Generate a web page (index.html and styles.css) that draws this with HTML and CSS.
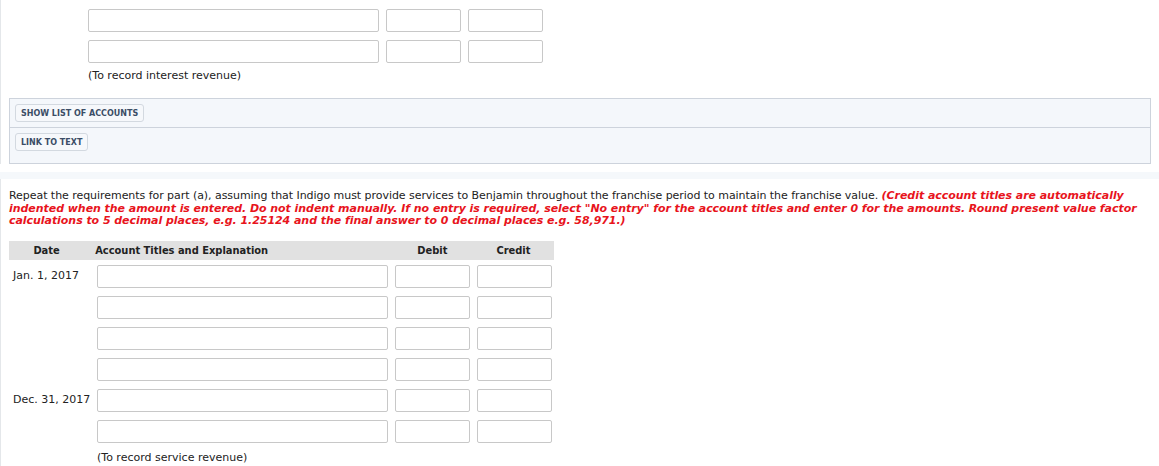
FILE: index.html
```html
<!DOCTYPE html>
<html>

<head>
    <title>Journal Entries</title>
    <link rel="stylesheet" href="styles.css">
</head>

<body>

    <div class="part-top">
        <div class="entry-row">
            <input class="acct" type="text">
            <input class="amt" type="text">
            <input class="amt" type="text">
        </div>
        <div class="entry-row">
            <input class="acct" type="text">
            <input class="amt" type="text">
            <input class="amt" type="text">
        </div>
        <p class="note">(To record interest revenue)</p>

        <div class="tools">
            <div class="tool-row"><button class="tool-btn">SHOW LIST OF ACCOUNTS</button></div>
            <div class="tool-row last"><button class="tool-btn">LINK TO TEXT</button></div>
        </div>
    </div>

    <div class="divider"></div>

    <div class="part-bottom">
        <p class="question">Repeat the requirements for part (a), assuming that Indigo must provide services to Benjamin throughout the franchise period to maintain the franchise value. <span class="hint">(Credit account titles are automatically indented when the amount is entered. Do not indent manually. If no entry is required, select "No entry" for the account titles and enter 0 for the amounts. Round present value factor calculations to 5 decimal places, e.g. 1.25124 and the final answer to 0 decimal places e.g. 58,971.)</span></p>

        <div class="journal">
            <div class="head">
                <span class="c-date">Date</span>
                <span class="c-acct">Account Titles and Explanation</span>
                <span class="c-amt">Debit</span>
                <span class="c-amt">Credit</span>
            </div>
            <div class="row">
                <span class="c-date date">Jan. 1, 2017</span>
                <input class="acct" type="text">
                <input class="amt" type="text">
                <input class="amt" type="text">
            </div>
            <div class="row">
                <span class="c-date date"></span>
                <input class="acct" type="text">
                <input class="amt" type="text">
                <input class="amt" type="text">
            </div>
            <div class="row">
                <span class="c-date date"></span>
                <input class="acct" type="text">
                <input class="amt" type="text">
                <input class="amt" type="text">
            </div>
            <div class="row">
                <span class="c-date date"></span>
                <input class="acct" type="text">
                <input class="amt" type="text">
                <input class="amt" type="text">
            </div>
            <div class="row">
                <span class="c-date date">Dec. 31, 2017</span>
                <input class="acct" type="text">
                <input class="amt" type="text">
                <input class="amt" type="text">
            </div>
            <div class="row">
                <span class="c-date date"></span>
                <input class="acct" type="text">
                <input class="amt" type="text">
                <input class="amt" type="text">
            </div>
            <p class="note">(To record service revenue)</p>
        </div>
    </div>

</body>
</html>
```

FILE: styles.css
```css
body {
    margin: 0;
    font-family: "DejaVu Sans", Verdana, sans-serif;
    font-size: 11px;
    color: #222;
    background: #fff;
}
input {
    box-sizing: border-box;
    display: block;
    height: 23px;
    border: 1px solid #c8c8c8;
    border-radius: 2px;
    background: #fff;
    margin: 0;
    padding: 0;
}
.part-top {
    border-left: 1px solid #e4e7ea;
    padding: 9px 8px 0 8px;
}
.entry-row {
    display: flex;
    gap: 7px;
    margin-left: 79px;
    margin-bottom: 8px;
}
.entry-row + .note {
    margin-top: -2px;
}
.acct {
    width: 291px;
}
.amt {
    width: 75px;
}
.note {
    margin: 0;
    font-size: 11px;
    line-height: 14px;
}
.part-top .note {
    margin-left: 79px;
}
.tools {
    margin-top: 15px;
    border: 1px solid #cdd3dc;
    background: #f4f7fb;
}
.tool-row {
    display: flex;
    padding: 5px 5px 5px 5px;
    border-bottom: 1px solid #cdd3dc;
}
.tool-row.last {
    border-bottom: none;
    padding-bottom: 12px;
}
.tool-btn {
    font-family: "DejaVu Sans", Verdana, sans-serif;
    font-size: 8px;
    font-weight: bold;
    color: #3b4d66;
    background: #f6f8fb;
    border: 1px solid #d3d9e0;
    border-radius: 3px;
    padding: 0 5px;
    height: 18px;
    cursor: pointer;
}
.divider {
    height: 7px;
    margin-top: 8px;
    background: #f5f8fb;
}
.part-bottom {
    border-left: 1px solid #e4e7ea;
    padding: 11px 9px 10px 8px;
}
.question {
    margin: 0;
    line-height: 12.5px;
    color: #222;
    letter-spacing: -0.05px;
}
.hint {
    color: #e8141c;
    font-weight: bold;
    font-style: italic;
}
.journal {
    margin-top: 13px;
}
.head {
    display: flex;
    width: 545px;
    height: 19px;
    align-items: center;
    background: #e1e1e1;
    font-family: "DejaVu Sans Condensed", Tahoma, sans-serif;
    font-weight: bold;
    font-size: 11px;
    margin-bottom: 5px;
}
.head .c-date {
    width: 76px;
    text-align: center;
}
.head .c-acct {
    width: 300px;
    padding-left: 11px;
}
.head .c-amt {
    width: 82px;
    text-align: center;
}
.row {
    display: flex;
    align-items: flex-start;
    gap: 7px;
    margin-bottom: 8px;
}
.row .c-date {
    width: 81px;
    padding-left: 4px;
    padding-top: 4px;
    box-sizing: border-box;
    white-space: nowrap;
}
.row .acct {
    width: 291px;
}
.row .amt {
    width: 75px;
}
.journal .note {
    margin-left: 88px;
    margin-top: 4px;
}
```
